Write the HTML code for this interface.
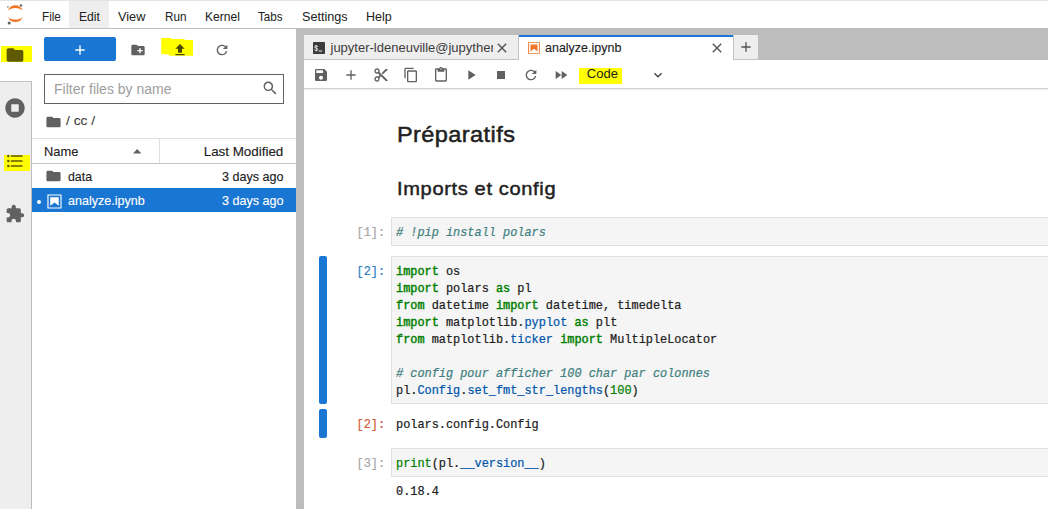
<!DOCTYPE html>
<html><head><meta charset="utf-8">
<style>
*{box-sizing:border-box;margin:0;padding:0}
html,body{width:1048px;height:509px;overflow:hidden;background:#fff}
body{font-family:"Liberation Sans",sans-serif;font-size:13px;color:#212121;position:relative}
.abs{position:absolute}
svg{position:absolute;overflow:visible}
.t{position:absolute;white-space:nowrap;line-height:16px;transform-origin:0 0;-webkit-text-stroke:0.12px}
.tr{position:absolute;white-space:nowrap;line-height:16px;transform-origin:100% 0;-webkit-text-stroke:0.12px}
#menubar{left:0;top:0;width:1048px;height:29px;background:#fff;border-bottom:1px solid #c0c0c0;border-top:1px solid #e4e4e4}
.mi{position:absolute;top:8.7px;line-height:16px;font-size:13px;color:#212121;white-space:nowrap;transform-origin:0 0}
#sidebar{left:0;top:29px;width:32px;height:480px;background:#eeeeee;border-right:1px solid #bdbdbd}
#sideact{left:0;top:29px;width:32px;height:52px;background:#fff}
#sideln{left:0;top:81px;width:32px;height:1px;background:#c4c4c4}
#fb{left:32px;top:29px;width:264px;height:480px;background:#fff}
#split{left:296px;top:28px;width:8px;height:481px;background:#bdbdbd}
#dockbg{left:296px;top:28px;width:752px;height:32px;background:#bdbdbd}
.tab{position:absolute;top:35px;height:25px;background:#eeeeee;border-right:1px solid #c2c2c2;border-bottom:1px solid #c2c2c2}
#toolbar{left:304px;top:60px;width:744px;height:29px;background:#fff;border-bottom:1px solid #cfcfcf}
#nb{left:304px;top:89px;width:744px;height:420px;background:#fff}
.mono{font-family:"Liberation Mono",monospace;font-size:11.9px;line-height:17px;white-space:pre;position:absolute;color:#212121;-webkit-text-stroke:0.220px}
.inp{position:absolute;left:391px;width:660px;background:#f5f5f5;border:1px solid #e0e0e0}
.k{color:#008000;font-weight:normal;-webkit-text-stroke:0.420px #008000}
.c{color:#408080;font-style:italic}
.p{color:#0055aa}
.n{color:#008000}
.bar{position:absolute;left:319px;width:8px;background:#1976d2;border-radius:2px}
.hl{position:absolute;background:#ffff00}
</style></head><body>

<div id="menubar" class="abs"></div>
<div class="abs" style="left:69px;top:1px;width:40px;height:27px;background:#eeeeee"></div>
<svg style="left:5px;top:3px" width="20" height="22" viewBox="0 0 20 22">
 <path d="M2.9 7.6 C5.4 0.6 15.300 0.600 17.800 7.600 C14.500 4.000 6.200 4.000 2.900 7.600Z" fill="#f37726"/>
 <path d="M2.900 13.900 C5.400 20.800 15.300 20.800 17.800 13.900 C14.500 17.400 6.200 17.400 2.900 13.900Z" fill="#f37726"/>
 <circle cx="16" cy="2.400" r="1.200" fill="#616161"/>
 <circle cx="4.200" cy="20" r="1.500" fill="#616161"/>
 <circle cx="2.900" cy="3.900" r="0.800" fill="#757575"/>
</svg>
<span class="mi" style="left:41.600px;transform:scaleX(.9)">File</span>
<span class="mi" style="left:78.500px;transform:scaleX(.93)">Edit</span>
<span class="mi" style="left:118.200px;transform:scaleX(.98)">View</span>
<span class="mi" style="left:164.800px;transform:scaleX(.9)">Run</span>
<span class="mi" style="left:204.700px;transform:scaleX(.932)">Kernel</span>
<span class="mi" style="left:258.200px;transform:scaleX(.89)">Tabs</span>
<span class="mi" style="left:301.500px;transform:scaleX(.97)">Settings</span>
<span class="mi" style="left:366.200px;transform:scaleX(.96)">Help</span>

<div id="sidebar" class="abs"></div>
<div id="sideact" class="abs"></div>
<div id="sideln" class="abs"></div>
<div class="hl" style="left:1px;top:46px;width:31px;height:16px"></div>
<svg style="left:5px;top:45px" width="20" height="20" viewBox="0 0 24 24"><path d="M10 4H4c-1.100 0-1.990.9-1.990 2L2 18c0 1.100.9 2 2 2h16c1.100 0 2-.9 2-2V8c0-1.100-.9-2-2-2h-8l-2-2z" fill="#5f5a00"/></svg>
<svg style="left:5.200px;top:97.500px" width="20" height="20" viewBox="0 0 512 512"><path d="M256 8C119 8 8 119 8 256s111 248 248 248 248-111 248-248S393 8 256 8zm96 328c0 8.800-7.200 16-16 16H176c-8.800 0-16-7.200-16-16V176c0-8.800 7.200-16 16-16h160c8.800 0 16 7.200 16 16v160z" fill="#616161"/></svg>
<div class="hl" style="left:4px;top:155px;width:26px;height:16px"></div>
<svg style="left:5px;top:150.700px" width="20" height="20" viewBox="0 0 24 24"><path d="M7,5H21V7H7V5M7,13V11H21V13H7M4,4.500A1.500,1.500 0 0,1 5.500,6A1.500,1.500 0 0,1 4,7.500A1.500,1.500 0 0,1 2.500,6A1.500,1.500 0 0,1 4,4.500M4,10.500A1.500,1.500 0 0,1 5.500,12A1.500,1.500 0 0,1 4,13.500A1.500,1.500 0 0,1 2.500,12A1.500,1.500 0 0,1 4,10.500M7,19V17H21V19H7M4,16.500A1.500,1.500 0 0,1 5.500,18A1.500,1.500 0 0,1 4,19.500A1.500,1.500 0 0,1 2.500,18A1.500,1.500 0 0,1 4,16.500Z" fill="#5f5a00"/></svg>
<svg style="left:5px;top:204px" width="20" height="20" viewBox="0 0 24 24"><path d="M20.500 11H19V7c0-1.100-.9-2-2-2h-4V3.500C13 2.120 11.880 1 10.500 1S8 2.120 8 3.500V5H4c-1.100 0-1.990.9-1.990 2v3.800H3.500c1.490 0 2.700 1.210 2.700 2.700s-1.210 2.700-2.700 2.700H2V20c0 1.100.9 2 2 2h3.800v-1.500c0-1.490 1.210-2.700 2.700-2.700 1.490 0 2.700 1.210 2.700 2.700V22H17c1.100 0 2-.9 2-2v-4h1.500c1.380 0 2.500-1.120 2.500-2.500S21.880 11 20.500 11z" fill="#616161"/></svg>

<div id="fb" class="abs"></div>
<div class="abs" style="left:44px;top:37px;width:72px;height:24px;background:#1976d2;border-radius:2px"></div>
<svg style="left:72px;top:42px" width="16" height="16" viewBox="0 0 24 24"><path d="M19 13h-6v6h-2v-6H5v-2h6V5h2v6h6v2z" fill="#fff"/></svg>
<svg style="left:130px;top:42px" width="16" height="16" viewBox="0 0 24 24"><path d="M20 6h-8l-2-2H4c-1.110 0-1.990.89-1.990 2L2 18c0 1.110.89 2 2 2h16c1.110 0 2-.89 2-2V8c0-1.110-.89-2-2-2zm-1 8h-3v3h-2v-3h-3v-2h3V9h2v3h3v2z" fill="#616161"/></svg>
<svg style="left:0;top:0" width="300" height="70" viewBox="0 0 300 70"><path d="M161.200 38H171v.9h13.700V40H193v15.800h-23.800v-1.200l-8-.6z" fill="#ffff00"/></svg>
<svg style="left:172px;top:42.200px" width="16" height="16" viewBox="0 0 24 24"><path d="M9 16h6v-6h4l-7-7-7 7h4zm-4 2h14v2H5z" fill="#4a4700"/></svg>
<svg style="left:214px;top:42px" width="16" height="16" viewBox="0 0 18 18"><path d="M9 13.500c-2.490 0-4.500-2.010-4.500-4.500S6.510 4.500 9 4.500c1.240 0 2.360.52 3.170 1.330L10 8h5V3l-1.760 1.760C12.150 3.680 10.660 3 9 3 5.690 3 3.010 5.690 3.010 9S5.690 15 9 15c2.970 0 5.430-2.160 5.900-5h-1.520c-.46 2-2.240 3.500-4.380 3.500z" fill="#616161"/></svg>

<div class="abs" style="left:44px;top:74px;width:240px;height:30px;border:1px solid #616161;background:#fff"></div>
<span class="t" style="left:54px;top:81px;font-size:14px;color:#9e9e9e;-webkit-text-stroke:0">Filter files by name</span>
<svg style="left:262.400px;top:80.300px" width="16" height="16" viewBox="0 0 18 18"><path d="M12.100 10.900h-.7l-.2-.2c.8-.9 1.300-2.200 1.300-3.500 0-3-2.400-5.400-5.400-5.400S1.800 4.200 1.800 7.100s2.400 5.400 5.400 5.400c1.300 0 2.500-.5 3.500-1.300l.2.200v.7l4.100 4.100 1.200-1.200-4.100-4.100zm-5 0c-2.100 0-3.700-1.700-3.700-3.700s1.700-3.700 3.700-3.700 3.700 1.700 3.700 3.700-1.600 3.700-3.700 3.700z" fill="#616161"/></svg>

<svg style="left:45.300px;top:113.500px" width="17" height="16" viewBox="0 0 24 24" preserveAspectRatio="none"><path d="M10 4H4c-1.100 0-1.990.9-1.990 2L2 18c0 1.100.9 2 2 2h16c1.100 0 2-.9 2-2V8c0-1.100-.9-2-2-2h-8l-2-2z" fill="#616161"/></svg>
<span class="t" style="left:65.800px;top:113.200px;font-size:13px;color:#424242;transform:scaleX(1.06)">/ cc /</span>

<div class="abs" style="left:32px;top:138px;width:264px;height:26px;border-top:1px solid #e0e0e0;border-bottom:1px solid #c4c4c4;background:#fff"></div>
<div class="abs" style="left:159px;top:139px;width:1px;height:24px;background:#e0e0e0"></div>
<span class="t" style="left:44.200px;top:143.500px;transform:scaleX(.99)">Name</span>
<svg style="left:132.800px;top:148.800px" width="8.400" height="4.400" viewBox="0 0 10 5" preserveAspectRatio="none"><path d="M0 5L5 0L10 5z" fill="#616161"/></svg>
<span class="tr" style="right:764.300px;top:143.500px;transform:scaleX(1.03)">Last Modified</span>

<svg style="left:45.300px;top:168px" width="17" height="16" viewBox="0 0 24 24" preserveAspectRatio="none"><path d="M10 4H4c-1.100 0-1.990.9-1.990 2L2 18c0 1.100.9 2 2 2h16c1.100 0 2-.9 2-2V8c0-1.100-.9-2-2-2h-8l-2-2z" fill="#616161"/></svg>
<span class="t" style="left:68.400px;top:169px;transform:scaleX(.95)">data</span>
<span class="tr" style="right:764.300px;top:169px;transform:scaleX(.968)">3 days ago</span>

<div class="abs" style="left:32px;top:188px;width:264px;height:24.400px;background:#1976d2"></div>
<div class="abs" style="left:36.600px;top:199.800px;width:4px;height:4px;border-radius:2px;background:#fff"></div>
<svg style="left:45.500px;top:192.500px" width="17" height="17" viewBox="0 0 22 22"><path d="M18.700 3.300v15.400H3.300V3.300h15.400m1.500-1.500H1.800v18.300h18.300l.1-18.300z" fill="#fff"/><path d="M16.500 16.500l-5.400-4.300-5.600 4.300v-11h11z" fill="#fff"/></svg>
<span class="t" style="left:68px;top:193.400px;color:#fff;transform:scaleX(.964)">analyze.ipynb</span>
<span class="tr" style="right:764.300px;top:193.400px;color:#fff;transform:scaleX(.968)">3 days ago</span>

<div id="dockbg" class="abs"></div>
<div id="split" class="abs"></div>
<div class="tab" style="left:304px;width:215px"></div>
<div class="tab" style="left:519px;width:214px;background:#fff;border:none;border-top:2px solid #1976d2;height:26px"></div>
<div class="tab" style="left:733px;width:25.400px;border-right:none;border-left:1px solid #c2c2c2"></div>
<svg style="left:313px;top:42px" width="12" height="12" viewBox="0 0 12 12"><rect width="12" height="12" rx="0.400" fill="#3d3d3d"/><path d="M4.700 4.700C4.700 4 4 3.750 3.250 3.750C2.400 3.750 1.800 4.150 1.800 4.900C1.800 6.350 4.750 5.850 4.750 7.400C4.750 8.200 4.050 8.600 3.250 8.600C2.400 8.600 1.700 8.250 1.700 7.550" fill="none" stroke="#fff" stroke-width="0.950"/><path d="M3.250 3v6.300" stroke="#fff" stroke-width="0.650"/><rect x="5.700" y="8.600" width="3.400" height="0.900" fill="#fff"/></svg>
<div class="abs" style="left:329px;top:38px;width:164.400px;height:20px;overflow:hidden"><span class="t" style="left:1.500px;top:2.300px;color:#3c3c3c;-webkit-text-stroke:0">jupyter-ldeneuville@jupytherm</span></div>
<svg style="left:494.200px;top:40.300px" width="16" height="16" viewBox="0 0 24 24"><path d="M19 6.410L17.590 5 12 10.590 6.410 5 5 6.410 10.590 12 5 17.590 6.410 19 12 13.410 17.590 19 19 17.590 13.410 12z" fill="#505050"/></svg>
<svg style="left:526.800px;top:41.300px" width="14" height="14" viewBox="0 0 22 22"><path d="M18.700 3.300v15.400H3.300V3.300h15.400m1.500-1.500H1.800v18.300h18.300l.1-18.300z" fill="#f0772c"/><path d="M16.500 16.500l-5.400-4.300-5.600 4.300v-11h11z" fill="#f0772c"/></svg>
<span class="t" style="left:545px;top:40.300px;transform:scaleX(.96)">analyze.ipynb</span>
<svg style="left:709.200px;top:40.200px" width="16" height="16" viewBox="0 0 24 24"><path d="M19 6.410L17.590 5 12 10.590 6.410 5 5 6.410 10.590 12 5 17.590 6.410 19 12 13.410 17.590 19 19 17.590 13.410 12z" fill="#505050"/></svg>
<svg style="left:737.800px;top:38.900px" width="16" height="16" viewBox="0 0 24 24"><path d="M19 13h-6v6h-2v-6H5v-2h6V5h2v6h6v2z" fill="#555"/></svg>

<div id="toolbar" class="abs"></div>
<!-- toolbar icons -->
<svg style="left:313.200px;top:67.300px" width="16" height="16" viewBox="0 0 24 24"><path d="M17 3H5c-1.110 0-2 .9-2 2v14c0 1.100.89 2 2 2h14c1.100 0 2-.9 2-2V7l-4-4zm-5 16c-1.660 0-3-1.340-3-3s1.340-3 3-3 3 1.340 3 3-1.340 3-3 3zm3-10H5V5h10v4z" fill="#616161"/></svg>
<svg style="left:342.900px;top:66.700px" width="16" height="16" viewBox="0 0 24 24"><path d="M19 13h-6v6h-2v-6H5v-2h6V5h2v6h6v2z" fill="#616161"/></svg>
<svg style="left:373px;top:67px" width="16" height="16" viewBox="0 0 24 24"><path d="M9.640 7.640c.23-.5.360-1.050.360-1.640 0-2.210-1.790-4-4-4S2 3.790 2 6s1.790 4 4 4c.59 0 1.140-.13 1.640-.36L10 12l-2.360 2.360C7.140 14.130 6.590 14 6 14c-2.210 0-4 1.790-4 4s1.790 4 4 4 4-1.790 4-4c0-.59-.13-1.140-.36-1.640L12 14l7 7h3v-1L9.640 7.640zM6 8c-1.100 0-2-.89-2-2s.9-2 2-2 2 .89 2 2-.9 2-2 2zm0 12c-1.100 0-2-.89-2-2s.9-2 2-2 2 .89 2 2-.9 2-2 2zm6-7.500c-.28 0-.5-.22-.5-.5s.22-.5.500-.5.500.22.500.5-.22.500-.5.500zM19 3l-6 6 2 2 7-7V3z" fill="#616161"/></svg>
<svg style="left:403px;top:67.200px" width="16" height="16" viewBox="0 0 24 24"><path d="M16 1H4c-1.100 0-2 .9-2 2v14h2V3h12V1zm3 4H8c-1.100 0-2 .9-2 2v14c0 1.100.9 2 2 2h11c1.100 0 2-.9 2-2V7c0-1.100-.9-2-2-2zm0 16H8V7h11v14z" fill="#616161"/></svg>
<svg style="left:433.200px;top:66.900px" width="16" height="16" viewBox="0 0 24 24"><path d="M19 2h-4.180C14.400.84 13.300 0 12 0c-1.300 0-2.400.84-2.820 2H5c-1.100 0-2 .9-2 2v16c0 1.100.9 2 2 2h14c1.100 0 2-.9 2-2V4c0-1.100-.9-2-2-2zm-7 0c.55 0 1 .45 1 1s-.45 1-1 1-1-.45-1-1 .45-1 1-1zm7 18H5V4h2v3h10V4h2v16z" fill="#616161"/></svg>
<svg style="left:463px;top:67px" width="16" height="16" viewBox="0 0 24 24"><path d="M8 5v14l11-7z" fill="#616161"/></svg>
<svg style="left:493px;top:67px" width="16" height="16" viewBox="0 0 24 24"><path d="M6 6h12v12H6z" fill="#616161"/></svg>
<svg style="left:523px;top:67px" width="16" height="16" viewBox="0 0 18 18"><path d="M9 13.500c-2.490 0-4.500-2.010-4.500-4.500S6.510 4.500 9 4.500c1.240 0 2.360.52 3.170 1.330L10 8h5V3l-1.760 1.760C12.150 3.680 10.660 3 9 3 5.690 3 3.010 5.690 3.010 9S5.690 15 9 15c2.970 0 5.430-2.160 5.900-5h-1.520c-.46 2-2.240 3.500-4.380 3.500z" fill="#616161"/></svg>
<svg style="left:553px;top:67px" width="16" height="16" viewBox="0 0 24 24"><path d="M4 18l8.500-6L4 6v12zm9-12v12l8.500-6L13 6z" fill="#616161"/></svg>
<div class="hl" style="left:579px;top:68px;width:43px;height:16px"></div>
<span class="t" style="left:586.800px;top:65.700px;font-size:13px;color:#212121;-webkit-text-stroke:0">Code</span>
<svg style="left:650px;top:66.800px" width="16" height="16" viewBox="0 0 24 24"><path d="M7.410 8.590L12 13.170l4.590-4.580L18 10l-6 6-6-6 1.410-1.410z" fill="#424242"/></svg>

<div id="nb" class="abs"></div>
<div class="abs" style="left:304px;top:89px;width:744px;height:2px;background:linear-gradient(rgba(0,0,0,.06),rgba(0,0,0,0))"></div>
<span class="t" style="left:397px;top:117.700px;font-size:22.800px;line-height:32px;color:#212121;-webkit-text-stroke:0.500px #212121;letter-spacing:0.400px;transform:scaleX(1.032)">Préparatifs</span>
<span class="t" style="left:397px;top:175px;font-size:19px;line-height:28px;color:#212121;-webkit-text-stroke:0.450px #212121;letter-spacing:0.600px;transform:scaleX(1.057)">Imports et config</span>

<div class="inp" style="top:217px;height:29px"></div>
<span class="mono" style="left:356.500px;top:225.3px;color:#a8a8a8">[1]:</span>
<span class="mono c" style="left:396px;top:225.3px"># !pip install polars</span>

<div class="bar" style="top:256px;height:148px"></div>
<div class="inp" style="top:256px;height:148px"></div>
<span class="mono" style="left:356.500px;top:264.3px;color:#307fc1">[2]:</span>
<div class="mono" style="left:396px;top:264.3px"><span class="k">import</span> os
<span class="k">import</span> polars <span class="k">as</span> pl
<span class="k">from</span> datetime <span class="k">import</span> datetime, timedelta
<span class="k">import</span> matplotlib<span class="o">.</span><span class="p">pyplot</span> <span class="k">as</span> plt
<span class="k">from</span> matplotlib<span class="o">.</span><span class="p">ticker</span> <span class="k">import</span> MultipleLocator

<span class="c"># config pour afficher 100 char par colonnes</span>
pl<span class="o">.</span><span class="p">Config</span><span class="o">.</span><span class="p">set_fmt_str_lengths</span>(<span class="n">100</span>)</div>

<div class="bar" style="top:409px;height:29px"></div>
<span class="mono" style="left:356.500px;top:417.3px;color:#d2603a">[2]:</span>
<span class="mono" style="left:396px;top:417.3px">polars.config.Config</span>

<div class="inp" style="top:448px;height:29px"></div>
<span class="mono" style="left:356.500px;top:456.3px;color:#a8a8a8">[3]:</span>
<div class="mono" style="left:396px;top:456.3px"><span class="n">print</span>(pl<span class="o">.</span><span class="p">__version__</span>)</div>
<span class="mono" style="left:396px;top:484.3px">0.18.4</span>

</body></html>
